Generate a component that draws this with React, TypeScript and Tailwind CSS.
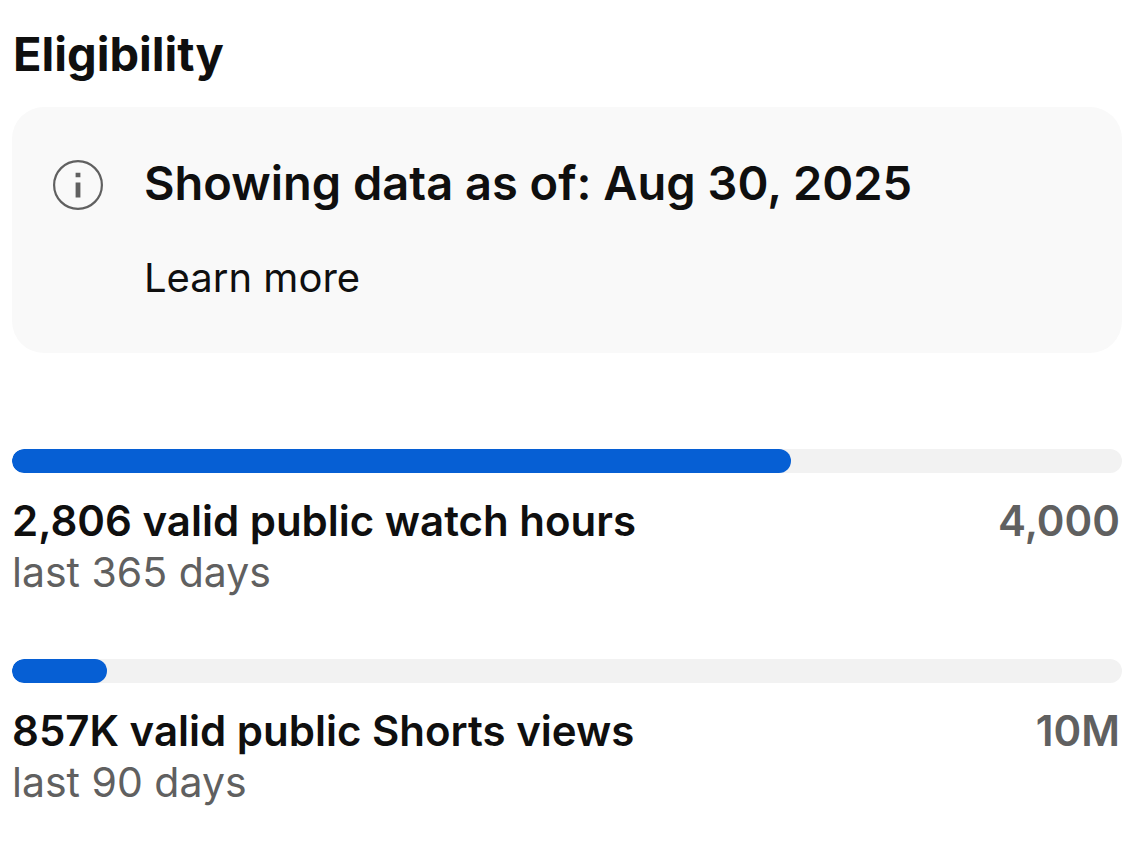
const goals = [
  { label: "2,806 valid public watch hours", period: "last 365 days", target: "4,000", percent: 70.15 },
  { label: "857K valid public Shorts views", period: "last 90 days", target: "10M", percent: 8.6 },
];

function InfoIcon() {
  return (
    <svg className="size-[50px] shrink-0 text-[#606060]" viewBox="0 0 50 50" fill="none" aria-hidden="true">
      <circle cx="25" cy="25" r="23.9" stroke="currentColor" strokeWidth="2.2" />
      <path d="M22.6 12.8h4.8v4.4h-4.8zM22.6 22.6h4.8v14.8h-4.8z" fill="currentColor" />
    </svg>
  );
}

export default function App() {
  return (
    <main className="bg-white pt-6 pr-[19px] pb-10 pl-3 font-['Inter',sans-serif] text-[#0f0f0f]">
      <h1 className="pl-px text-[47px] leading-[60px] font-bold">Eligibility</h1>
      <section className="mt-[23px] flex items-start gap-[41px] rounded-[32px] bg-[#f9f9f9] pt-[47px] pb-[49px] pl-[41px]">
        <div className="pt-[6px]">
          <InfoIcon />
        </div>
        <div>
          <h2 className="text-[47px] leading-[58px] font-semibold">Showing data as of: Aug 30, 2025</h2>
          <a href="#learn" className="mt-10 block text-[40px] leading-[52px]">Learn more</a>
        </div>
      </section>
      <div className="mt-24 flex flex-col gap-[61px]">
        {goals.map((g) => (
          <section key={g.label}>
            <div
              role="progressbar"
              aria-label={g.label}
              aria-valuenow={g.percent}
              aria-valuemin={0}
              aria-valuemax={100}
              className="h-6 overflow-hidden rounded-full bg-[#f2f2f2]"
            >
              <div className="h-full rounded-full bg-[#065fd4]" style={{ width: `${g.percent}%` }} />
            </div>
            <div className="mt-[23px] flex justify-between pr-[2px] text-[42px] leading-[50px] font-semibold">
              <p>{g.label}</p>
              <p className="text-[#606060]">{g.target}</p>
            </div>
            <p className="text-[41px] leading-[52px] text-[#606060]">{g.period}</p>
          </section>
        ))}
      </div>
    </main>
  );
}
